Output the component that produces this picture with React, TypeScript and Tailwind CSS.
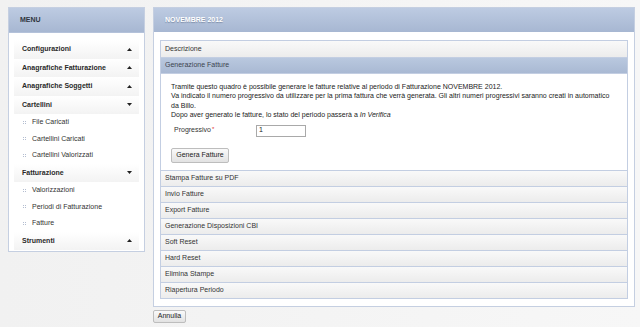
import React from "react";

const Up = () => (
  <svg width="5" height="3" viewBox="0 0 5 3" className="block">
    <path d="M0 3 L2.5 0 L5 3 Z" fill="#222" />
  </svg>
);
const Down = () => (
  <svg width="5" height="3" viewBox="0 0 5 3" className="block">
    <path d="M0 0 L5 0 L2.5 3 Z" fill="#222" />
  </svg>
);

function Section({ label, open }: { label: string; open?: boolean }) {
  return (
    <div className="h-[18.5px] flex items-center justify-between pl-[8px] pr-[7px] bg-gradient-to-b from-white to-[#f3f3f3] text-[7px] font-bold text-[#2a2a2a]">
      <span>{label}</span>
      {open ? <Down /> : <Up />}
    </div>
  );
}

function Sub({ label }: { label: string }) {
  return (
    <div className="h-[16.5px] flex items-center pl-[9px] text-[7px] text-[#333]">
      <span className="w-[9px] flex flex-col gap-[1px]">
        <span className="flex gap-[1px]">
          <span className="w-[1px] h-[1px] bg-[#b3bdd0]" />
          <span className="w-[1px] h-[1px] bg-[#b3bdd0]" />
        </span>
        <span className="flex gap-[1px]">
          <span className="w-[1px] h-[1px] bg-[#b3bdd0]" />
          <span className="w-[1px] h-[1px] bg-[#b3bdd0]" />
        </span>
      </span>
      <span>{label}</span>
    </div>
  );
}

function AccHead({ label, active, first }: { label: string; active?: boolean; first?: boolean }) {
  return (
    <div
      className={
        "h-[16px] flex items-center pl-[4px] text-[7px] " +
        (first ? "" : "border-t border-[#c3cee2] ") +
        (active
          ? "bg-gradient-to-b from-[#b9c8df] to-[#a9b9d3] text-[#3d4450]"
          : "bg-gradient-to-b from-[#f9f9f9] to-[#ececec] text-[#333]")
      }
    >
      {label}
    </div>
  );
}

export default function App() {
  return (
    <div className="w-[640px] min-h-[327px] bg-gradient-to-r from-[#f1f1f1] to-[#f7f7f7] font-['Liberation_Sans',Arial,sans-serif] flex items-start pl-[8px] pt-[7px] gap-[8px]">
      {/* Left menu */}
      <div className="w-[137px] h-[245px] border border-[#c5cfe1] bg-white flex flex-col">
        <div className="h-[25px] bg-gradient-to-b from-[#bdcbe2] to-[#a7b7d2] flex items-center pl-[11px] text-[7px] font-bold text-[#2f3540] border-b border-[#b4c2da]">
          MENU
        </div>
        <div className="pt-[7px] px-[5px]">
          <Section label="Configurazioni" />
          <Section label="Anagrafiche Fatturazione" />
          <Section label="Anagrafiche Soggetti" />
          <Section label="Cartellini" open />
          <Sub label="File Caricati" />
          <Sub label="Cartellini Caricati" />
          <Sub label="Cartellini Valorizzati" />
          <Section label="Fatturazione" open />
          <Sub label="Valorizzazioni" />
          <Sub label="Periodi di Fatturazione" />
          <Sub label="Fatture" />
          <Section label="Strumenti" />
        </div>
      </div>

      {/* Right panel */}
      <div className="w-[482px] flex flex-col">
        <div className="border border-[#c5cfe1] bg-white">
          <div className="h-[24px] bg-gradient-to-b from-[#bdcbe2] to-[#a7b7d2] flex items-center pl-[11px] text-[7px] font-bold text-white [text-shadow:0_1px_1px_#7f8ea8]">
            NOVEMBRE 2012
          </div>
          <div className="pt-[8px] pb-[7px] pl-[6px] pr-[6px]">
            <div className="border border-[#c3cee2]">
              <AccHead label="Descrizione" first />
              <AccHead label="Generazione Fatture" active />
              <div className="h-[97px] border-t border-[#c3cee2] bg-white pl-[10px] pt-[8px] text-[7px] text-[#222]">
                <div className="leading-[9.4px] whitespace-nowrap">
                  <div>Tramite questo quadro è possibile generare le fatture relative al periodo di Fatturazione NOVEMBRE 2012.</div>
                  <div>Va indicato il numero progressivo da utilizzare per la prima fattura che verrà generata. Gli altri numeri progressivi saranno creati in automatico</div>
                  <div>da Billo.</div>
                  <div>
                    Dopo aver generato le fatture, lo stato del periodo passerà a <i>In Verifica</i>
                  </div>
                </div>
                <div className="mt-[5px] flex items-center h-[12px]">
                  <div className="w-[85px] pl-[3px] text-[#333]">
                    Progressivo<span className="text-[#e03030] text-[6px] align-top ml-[1px]">*</span>
                  </div>
                  <div className="w-[50px] h-[12px] border border-[#a9a9a9] bg-white flex items-center pl-[2px] text-[7px]">1</div>
                </div>
                <button className="mt-[11px] h-[15px] w-[58px] border border-[#bdbdbd] rounded-[2px] bg-gradient-to-b from-[#fafafa] to-[#e2e2e2] text-[7px] text-[#222] flex items-center justify-center">
                  Genera Fatture
                </button>
              </div>
              <AccHead label="Stampa Fatture su PDF" />
              <AccHead label="Invio Fatture" />
              <AccHead label="Export Fatture" />
              <AccHead label="Generazione Disposizioni CBI" />
              <AccHead label="Soft Reset" />
              <AccHead label="Hard Reset" />
              <AccHead label="Elimina Stampe" />
              <AccHead label="Riapertura Periodo" />
            </div>
          </div>
        </div>
        <button className="mt-[3px] h-[13px] w-[33px] border border-[#bdbdbd] rounded-[2px] bg-gradient-to-b from-[#fafafa] to-[#e2e2e2] text-[7px] text-[#222] flex items-center justify-center">
          Annulla
        </button>
      </div>
    </div>
  );
}
